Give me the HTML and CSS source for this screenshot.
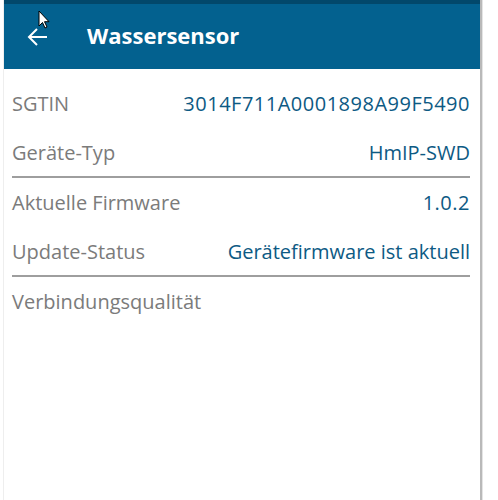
FILE: index.html
```html
<!DOCTYPE html>
<html>
<head>
<meta charset="utf-8">
<link rel="stylesheet" href="styles.css">
</head>
<body>
<div class="screen">
  <div class="statusbar"></div>
  <header class="toolbar">
    <svg class="back" width="22" height="20" viewBox="0 0 22 20"><path d="M21 10H3M11 2L3 10l8 8" fill="none" stroke="#fff" stroke-width="2"/></svg>
    <h1 class="title">Wassersensor</h1>
    <svg class="cursor" width="12" height="19" viewBox="0 0 12 19"><path d="M1 1v15l3.5-3.5 2.5 5.5 2-1-2.5-5.3H11z" fill="#fff" stroke="#000" stroke-width="1"/></svg>
  </header>
  <main class="content">
    <div class="row"><span class="label">SGTIN</span><span class="value code">3014F711A0001898A99F5490</span></div>
    <div class="row"><span class="label">Geräte-Typ</span><span class="value">HmIP-SWD</span></div>
    <div class="divider"></div>
    <div class="row"><span class="label">Aktuelle Firmware</span><span class="value code">1.0.2</span></div>
    <div class="row"><span class="label">Update-Status</span><span class="value">Gerätefirmware ist aktuell</span></div>
    <div class="divider"></div>
    <div class="row"><span class="label">Verbindungsqualität</span></div>
  </main>
</div>
</body>
</html>
```

FILE: styles.css
```css
html, body {
  margin: 0;
  padding: 0;
  background: #fff;
  height: 500px;
  overflow: hidden;
}
.screen {
  margin-left: 3px;
  width: 476px;
  height: 500px;
  border-left: 1px solid #eeeeee;
  border-right: 2px solid #b9b9b9;
  box-shadow: 1px 0 0 #e4e4e4;
  display: flex;
  flex-direction: column;
  font-family: "Open Sans", Lato, sans-serif;
}
.statusbar {
  height: 4px;
  background: #02486b;
}
.toolbar {
  position: relative;
  height: 65px;
  background: #03618f;
  display: flex;
  align-items: center;
  box-sizing: border-box;
  padding-left: 22px;
}
.back {
  margin-right: 39px;
}
.title {
  margin: 0 0 3px 0;
  color: #fff;
  font-size: 22px;
  font-weight: 700;
}
.cursor {
  position: absolute;
  left: 34px;
  top: 6px;
}
.content {
  padding: 10px 10px 0 8px;
  display: flex;
  flex-direction: column;
}
.row {
  height: 49px;
  display: flex;
  align-items: center;
  justify-content: space-between;
  font-size: 20px;
}
.label {
  color: #7b7b7b;
}
.value {
  color: #0d5a84;
}
.code {
  letter-spacing: 0.5px;
}
.divider {
  height: 2px;
  background: #9e9e9e;
  margin-top: -1px;
}
```
